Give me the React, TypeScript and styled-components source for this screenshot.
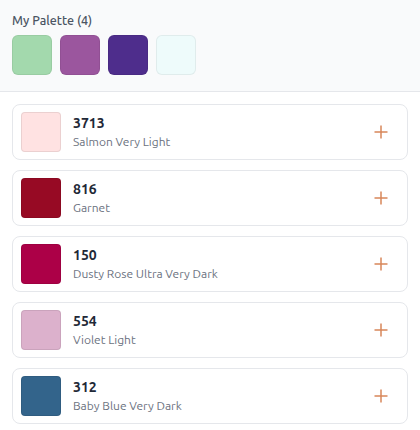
import React from "react";
import styled, { createGlobalStyle } from "styled-components";

const Global = createGlobalStyle`
  html, body { margin: 0; padding: 0; background: #ffffff; }
  body { font-family: "Ubuntu", "Noto Sans", "Open Sans", sans-serif; }
  * { box-sizing: border-box; }
`;

const Page = styled.div`
  width: 420px;
  height: 430px;
  overflow: hidden;
  background: #ffffff;
`;

const Header = styled.div`
  background: #f9fafb;
  border-bottom: 1px solid #e5e7eb;
  padding: 13px 12px 16px;
  display: flex;
  flex-direction: column;
  gap: 7px;
`;

const Title = styled.div`
  font-size: 12.5px;
  line-height: 15px;
  color: #4b5563;
  font-weight: 500;
`;

const SwatchRow = styled.div`
  display: flex;
  gap: 8px;
`;

const Swatch = styled.div<{ $c: string }>`
  width: 40px;
  height: 40px;
  border-radius: 6px;
  background: ${(p) => p.$c};
  border: 1px solid rgba(0, 0, 0, 0.06);
`;

const List = styled.div`
  padding: 12px 12px;
  display: flex;
  flex-direction: column;
  gap: 10px;
`;

const Card = styled.div`
  height: 56px;
  border: 1px solid #e5e7eb;
  border-radius: 8px;
  background: #fff;
  display: flex;
  align-items: center;
  padding: 0 8px;
  gap: 12px;
`;

const Chip = styled.div<{ $c: string }>`
  width: 40px;
  height: 40px;
  border-radius: 4px;
  background: ${(p) => p.$c};
  border: 1px solid rgba(0, 0, 0, 0.08);
  flex-shrink: 0;
`;

const Info = styled.div`
  flex: 1;
  display: flex;
  flex-direction: column;
  gap: 3px;
`;

const Code = styled.div`
  font-size: 14px;
  line-height: 17px;
  font-weight: 700;
  color: #1f2937;
`;

const Name = styled.div`
  font-size: 12px;
  line-height: 14px;
  color: #6b7280;
`;

const AddBtn = styled.button`
  width: 30px;
  height: 30px;
  border: 0;
  background: transparent;
  display: flex;
  align-items: center;
  justify-content: center;
  padding: 0;
  margin-right: 3px;
`;

const palette = ["#a3d9ad", "#9b569e", "#4e2d8c", "#eefbfb"];

const threads = [
  { code: "3713", name: "Salmon Very Light", c: "#ffe2e2" },
  { code: "816", name: "Garnet", c: "#970a24" },
  { code: "150", name: "Dusty Rose Ultra Very Dark", c: "#ac0047" },
  { code: "554", name: "Violet Light", c: "#dcb1cc" },
  { code: "312", name: "Baby Blue Very Dark", c: "#33648b" },
];

const Plus = () => (
  <svg width="14" height="14" viewBox="0 0 14 14">
    <path d="M7 0.5V13.5M0.5 7H13.5" stroke="#d8865a" strokeWidth="1.5" />
  </svg>
);

export default function App() {
  return (
    <Page>
      <Global />
      <Header>
        <Title>My Palette (4)</Title>
        <SwatchRow>
          {palette.map((c) => (
            <Swatch key={c} $c={c} />
          ))}
        </SwatchRow>
      </Header>
      <List>
        {threads.map((t) => (
          <Card key={t.code}>
            <Chip $c={t.c} />
            <Info>
              <Code>{t.code}</Code>
              <Name>{t.name}</Name>
            </Info>
            <AddBtn aria-label="add">
              <Plus />
            </AddBtn>
          </Card>
        ))}
      </List>
    </Page>
  );
}
